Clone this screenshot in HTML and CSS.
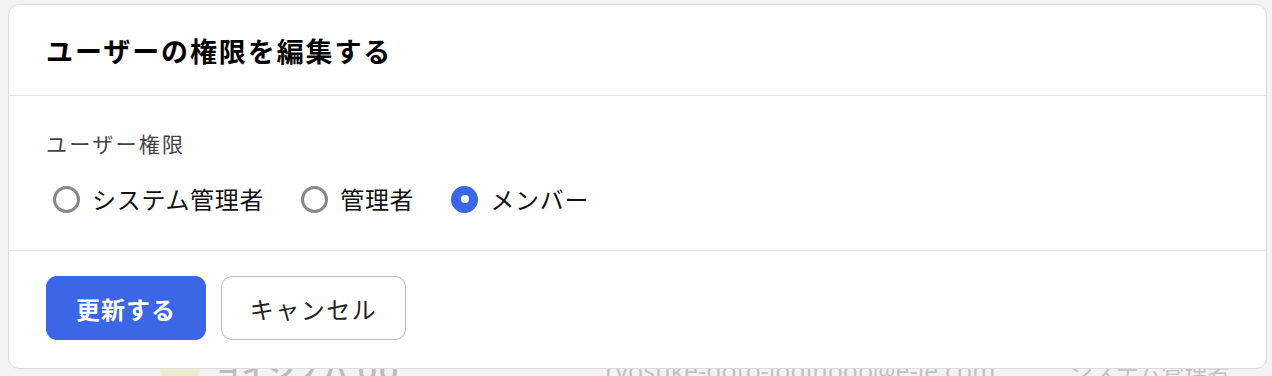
FILE: index.html
```html
<!DOCTYPE html>
<html lang="ja">
<head>
<meta charset="utf-8">
<link rel="stylesheet" href="styles.css">
</head>
<body>
<div class="page">
  <div class="bg-row">
    <span class="bg-avatar"></span>
    <span class="bg-name">ヨイシノバ OO</span>
    <span class="bg-email">ryosuke-goto-loginooo@e-ie.com</span>
    <span class="bg-role">システム管理者</span>
  </div>
  <div class="modal">
    <div class="modal-header">
      <h1 class="modal-title">ユーザーの権限を編集する</h1>
    </div>
    <div class="modal-body">
      <div class="field-label">ユーザー権限</div>
      <div class="radio-group">
        <label class="radio"><span class="radio-mark"></span><span class="radio-text">システム管理者</span></label>
        <label class="radio"><span class="radio-mark"></span><span class="radio-text">管理者</span></label>
        <label class="radio"><span class="radio-mark checked"></span><span class="radio-text">メンバー</span></label>
      </div>
    </div>
    <div class="modal-footer">
      <button class="btn btn-primary">更新する</button>
      <button class="btn btn-secondary">キャンセル</button>
    </div>
  </div>
</div>
</body>
</html>
```
FILE: styles.css
```css
* { box-sizing: border-box; }
html, body {
  margin: 0;
  padding: 0;
  width: 1272px;
  height: 376px;
  overflow: hidden;
  background: #f3f3f3;
  font-family: "Noto Sans CJK JP", "Noto Sans", sans-serif;
}
.page {
  position: relative;
  width: 1272px;
  height: 376px;
}
.bg-row {
  display: flex;
  align-items: center;
  padding: 350px 0 0 160px;
  color: #c2c2c2;
  font-size: 23px;
}
.bg-avatar {
  width: 40px;
  height: 40px;
  border-radius: 50%;
  background: #ebeccb;
  margin-right: 15px;
}
.bg-name { font-weight: 700; font-size: 25px; letter-spacing: 2px; width: 390px; color: #bdbdbd; }
.bg-email { width: 465px; font-family: "Noto Sans", sans-serif; font-size: 25px; }
.bg-role { font-size: 23px; }

.modal {
  position: absolute;
  left: 8px;
  top: 4px;
  width: 1259px;
  height: 365px;
  background: #fff;
  border: 1px solid #dcdcdc;
  border-radius: 11px;
  display: flex;
  flex-direction: column;
}
.modal-header {
  height: 91px;
  padding: 0 37px;
  display: flex;
  align-items: center;
  border-bottom: 1px solid #e6e6e6;
}
.modal-title {
  margin: 0;
  font-size: 27px;
  font-weight: 700;
  letter-spacing: 1.9px;
  color: #000;
}
.modal-body {
  height: 155px;
  padding: 33px 37px 0;
  border-bottom: 1px solid #e6e6e6;
}
.field-label {
  font-size: 21px;
  color: #444;
  letter-spacing: 2.3px;
  line-height: 28px;
}
.radio-group {
  display: flex;
  align-items: center;
  margin-top: 27px;
  gap: 30px;
}
.radio {
  display: flex;
  align-items: center;
  gap: 12px;
}
.radio-mark {
  width: 27px;
  height: 27px;
  border-radius: 50%;
  border: 3px solid #888;
  margin-left: 7px;
  display: flex;
  align-items: center;
  justify-content: center;
}
.radio-mark.checked {
  border: none;
  background: #3b66e6;
}
.radio-mark.checked::after {
  content: "";
  width: 8px;
  height: 8px;
  border-radius: 50%;
  background: #fff;
}
.radio-text {
  font-size: 24px;
  color: #111;
  letter-spacing: 0.7px;
  line-height: 30px;
}
.modal-footer {
  flex: 1;
  display: flex;
  align-items: flex-start;
  gap: 15px;
  padding: 25px 37px 0;
}
.btn {
  height: 64px;
  border-radius: 11px;
  font-family: "Noto Sans CJK JP", "Noto Sans", sans-serif;
  font-size: 24px;
  cursor: pointer;
}
.btn-primary {
  width: 160px;
  background: #3b66e6;
  color: #fff;
  font-weight: 700;
  letter-spacing: 1px;
  border: none;
}
.btn-secondary {
  width: 185px;
  background: #fff;
  color: #222;
  letter-spacing: 1.5px;
  border: 1px solid #bdbdbd;
}
```
